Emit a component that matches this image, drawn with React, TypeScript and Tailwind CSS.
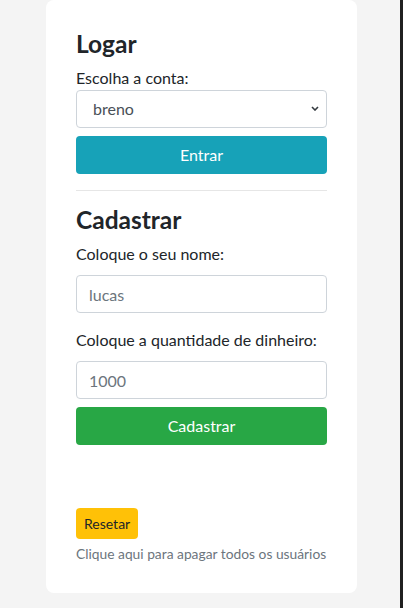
import { useState } from 'react'

const font = { fontFamily: 'Lato, "Liberation Sans", sans-serif' }

export default function App() {
  const [conta, setConta] = useState('breno')
  const [nome, setNome] = useState('')
  const [dinheiro, setDinheiro] = useState('')

  return (
    <div className="flex min-h-[608px] bg-[#f4f4f4] text-[#212529]" style={font}>
      <div className="flex flex-1 pl-[46px]">
        <div className="w-[311px] h-[593px] bg-white rounded-lg px-[30px] pt-[29px] pb-[29px] flex flex-col">
          {/* Logar */}
          <h4 className="text-[24.5px] leading-[29px] font-bold mb-2">Logar</h4>
          <label className="text-[16px] leading-6 block">Escolha a conta:</label>
          <div className="relative">
            <select
              value={conta}
              onChange={e => setConta(e.target.value)}
              className="appearance-none w-full h-[38px] border border-[#ced4da] rounded pl-4 pr-7 text-[16px] text-[#495057] bg-white"
            >
              <option value="breno">breno</option>
              <option value="lucas">lucas</option>
            </select>
            <svg className="absolute right-[8px] top-[16px] pointer-events-none" width="8" height="5" viewBox="0 0 8 5">
              <path d="M1 1l3 3 3-3" fill="none" stroke="#343a40" strokeWidth="1.6" />
            </svg>
          </div>
          <button className="mt-2 h-[38px] w-full bg-[#17a2b8] text-white rounded text-[16px]">Entrar</button>

          <hr className="mt-4 mb-[14px] border-t border-[#e6e6e6]" />

          {/* Cadastrar */}
          <h4 className="text-[24.5px] leading-[29px] font-bold mb-2">Cadastrar</h4>
          <label className="text-[16px] leading-6 block mb-[9px]">Coloque o seu nome:</label>
          <input
            value={nome}
            onChange={e => setNome(e.target.value)}
            placeholder="lucas"
            className="h-[38px] w-full border border-[#ced4da] rounded px-3 text-[16px] text-[#495057] placeholder:text-[#6c757d] mb-[15px]"
          />
          <label className="text-[16px] leading-6 block mb-[9px]">Coloque a quantidade de dinheiro:</label>
          <input
            value={dinheiro}
            onChange={e => setDinheiro(e.target.value)}
            placeholder="1000"
            className="h-[38px] w-full border border-[#ced4da] rounded px-3 text-[16px] text-[#495057] placeholder:text-[#6c757d]"
          />
          <button className="mt-2 h-[38px] w-full bg-[#28a745] text-white rounded text-[16px]">Cadastrar</button>

          <div className="mt-auto">
            <button className="h-[31px] px-2 bg-[#ffc107] rounded text-[14px] text-[#212529]">Resetar</button>
            <p className="mt-[5px] text-[13.8px] leading-[20px] text-[#6c757d]">Clique aqui para apagar todos os usuários</p>
          </div>
        </div>
      </div>
      <div className="w-[3px] bg-[#202020]" />
    </div>
  )
}
